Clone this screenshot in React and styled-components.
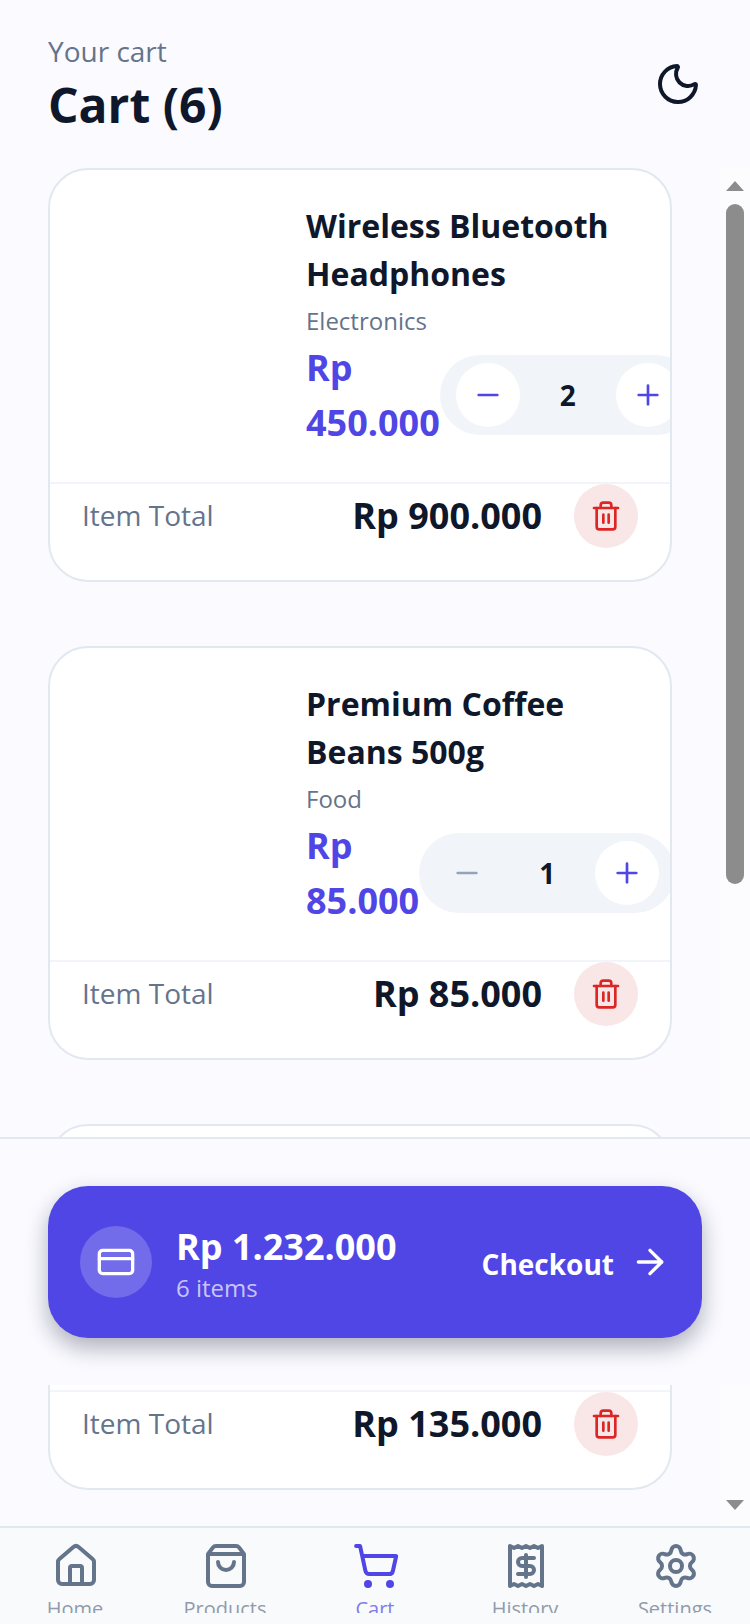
import React from 'react';
import styled, { createGlobalStyle } from 'styled-components';
import {
  ArrowRight,
  CreditCard,
  House,
  Minus,
  Moon,
  Plus,
  Receipt,
  Settings,
  ShoppingBag,
  ShoppingCart,
  Trash2,
} from 'lucide-react';

const items = [
  { id: 1, name: 'Wireless Bluetooth Headphones', category: 'Electronics', price: 'Rp 450.000', qty: 2, total: 'Rp 900.000' },
  { id: 2, name: 'Premium Coffee Beans 500g', category: 'Food', price: 'Rp 85.000', qty: 1, total: 'Rp 85.000', atMin: true },
];

const navItems = [
  { label: 'Home', icon: House },
  { label: 'Products', icon: ShoppingBag },
  { label: 'Cart', icon: ShoppingCart, active: true },
  { label: 'History', icon: Receipt },
  { label: 'Settings', icon: Settings },
];

function CardFooter({ total }) {
  return (
    <Footer>
      <TotalLabel>Item Total</TotalLabel>
      <TotalValue>{total}</TotalValue>
      <TrashButton>
        <Trash2 size={32} />
      </TrashButton>
    </Footer>
  );
}

export default function App() {
  return (
    <Page>
      <GlobalStyle />
      <Header>
        <div>
          <Eyebrow>Your cart</Eyebrow>
          <Title>Cart (6)</Title>
        </div>
        <Moon size={48} color="#0f172a" />
      </Header>

      <Main>
        <List>
          {items.map((item) => (
            <Card key={item.id}>
              <Body>
                <Thumb />
                <Info>
                  <Name>{item.name}</Name>
                  <Category>{item.category}</Category>
                  <PriceRow>
                    <Price>{item.price}</Price>
                    <Stepper>
                      <StepButton $muted={item.atMin}>
                        <Minus size={32} />
                      </StepButton>
                      <Qty>{item.qty}</Qty>
                      <StepButton>
                        <Plus size={32} />
                      </StepButton>
                    </Stepper>
                  </PriceRow>
                </Info>
              </Body>
              <CardFooter total={item.total} />
            </Card>
          ))}
          <Card>
            <Body $height={264} />
            <CardFooter total="Rp 135.000" />
          </Card>
        </List>

        <Rail>
          <ArrowUp />
          <Thumbbar />
          <ArrowDown />
        </Rail>

        <CheckoutDock>
          <CheckoutBar>
            <CardCircle>
              <CreditCard size={40} />
            </CardCircle>
            <Summary>
              <SummaryTotal>Rp 1.232.000</SummaryTotal>
              <SummaryCount>6 items</SummaryCount>
            </Summary>
            <CheckoutAction>
              <CheckoutText>Checkout</CheckoutText>
              <ArrowRight size={40} />
            </CheckoutAction>
          </CheckoutBar>
        </CheckoutDock>
      </Main>

      <Nav>
        {navItems.map(({ label, icon: Icon, active }) => (
          <NavItem key={label} $active={active}>
            <Icon size={48} />
            <NavLabel>{label}</NavLabel>
          </NavItem>
        ))}
      </Nav>
    </Page>
  );
}

const GlobalStyle = createGlobalStyle`
  html, body {
    margin: 0;
    padding: 0;
    background: #fafaff;
  }
  * {
    box-sizing: border-box;
  }
`;

const Page = styled.div`
  width: 750px;
  height: 1624px;
  display: flex;
  flex-direction: column;
  overflow: hidden;
  background: #fafaff;
  font-family: 'Open Sans', 'Noto Sans', sans-serif;
  color: #0f172a;
`;

const Header = styled.header`
  height: 168px;
  flex-shrink: 0;
  padding: 31px 48px 0;
  display: flex;
  justify-content: space-between;
  align-items: flex-start;

  > svg {
    margin-top: 29px;
  }
`;

const Eyebrow = styled.div`
  font-size: 28px;
  line-height: 40px;
  color: #64748b;
`;

const Title = styled.h1`
  margin: 0;
  font-size: 48px;
  line-height: 67px;
  font-weight: 700;
`;

const Main = styled.main`
  flex: 1;
  min-height: 0;
  display: flex;
  position: relative;
  overflow: hidden;
`;

const List = styled.div`
  width: 720px;
  flex-shrink: 0;
  padding: 0 48px;
  display: flex;
  flex-direction: column;
  gap: 64px;
`;

const Card = styled.article`
  flex-shrink: 0;
  background: #fff;
  border: 2px solid #e2e8f0;
  border-radius: 40px;
  overflow: hidden;
`;

const Body = styled.div`
  display: flex;
  height: ${(p) => (p.$height ? `${p.$height}px` : 'auto')};
`;

const Thumb = styled.div`
  width: 256px;
  flex-shrink: 0;
`;

const Info = styled.div`
  flex: 1;
  min-width: 0;
  padding: 32px 32px 32px 0;
`;

const Name = styled.h2`
  margin: 0;
  font-size: 32px;
  line-height: 48px;
  font-weight: 700;
`;

const Category = styled.div`
  margin: 7px 0 3px;
  font-size: 24px;
  line-height: 32px;
  color: #64748b;
`;

const PriceRow = styled.div`
  display: flex;
  align-items: center;
`;

const Price = styled.div`
  font-size: 36px;
  line-height: 55px;
  font-weight: 700;
  color: #4f46e5;
`;

const Stepper = styled.div`
  width: 256px;
  height: 80px;
  flex-shrink: 0;
  padding: 0 16px;
  display: flex;
  align-items: center;
  justify-content: space-between;
  border-radius: 40px;
  background: #f1f5f9;
`;

const StepButton = styled.div`
  width: 64px;
  height: 64px;
  display: flex;
  align-items: center;
  justify-content: center;
  border-radius: 50%;
  background: ${(p) => (p.$muted ? 'transparent' : '#fff')};
  color: ${(p) => (p.$muted ? '#94a3b8' : '#4f46e5')};
`;

const Qty = styled.span`
  font-size: 28px;
  font-weight: 700;
`;

const Footer = styled.div`
  padding: 0 32px 32px;
  display: flex;
  align-items: center;
  border-top: 2px solid #f1f5f9;
`;

const TotalLabel = styled.span`
  flex: 1;
  margin-top: -2px;
  font-size: 28px;
  color: #64748b;
`;

const TotalValue = styled.span`
  margin-top: -2px;
  font-size: 36px;
  font-weight: 700;
`;

const TrashButton = styled.div`
  width: 64px;
  height: 64px;
  margin-left: 32px;
  display: flex;
  align-items: center;
  justify-content: center;
  border-radius: 50%;
  background: #f9e6e6;
  color: #dc2626;
`;

const Rail = styled.div`
  width: 30px;
  padding: 13px 6px 16px;
  display: flex;
  flex-direction: column;
  align-items: center;
  background: #fcfcfe;
`;

const ArrowUp = styled.div`
  width: 0;
  height: 0;
  border-left: 9px solid transparent;
  border-right: 9px solid transparent;
  border-bottom: 10px solid #8c8c8c;
`;

const ArrowDown = styled.div`
  margin-top: auto;
  width: 0;
  height: 0;
  border-left: 9px solid transparent;
  border-right: 9px solid transparent;
  border-top: 10px solid #8c8c8c;
`;

const Thumbbar = styled.div`
  width: 18px;
  height: 680px;
  margin-top: 13px;
  border-radius: 9px;
  background: #8c8c8c;
`;

const CheckoutDock = styled.div`
  position: absolute;
  top: 969px;
  left: 0;
  right: 0;
  height: 248px;
  padding: 47px 48px 0;
  background: #fafaff;
  border-top: 2px solid #e2e8f0;
`;

const CheckoutBar = styled.div`
  height: 152px;
  padding: 0 32px;
  display: flex;
  align-items: center;
  border-radius: 40px;
  background: #4f46e5;
  color: #fff;
  box-shadow: 0 10px 22px rgba(15, 23, 42, 0.32);
`;

const CardCircle = styled.div`
  width: 72px;
  height: 72px;
  flex-shrink: 0;
  display: flex;
  align-items: center;
  justify-content: center;
  border-radius: 50%;
  background: rgba(255, 255, 255, 0.2);
`;

const Summary = styled.div`
  flex: 1;
  margin-left: 24px;
  padding-top: 2px;
`;

const SummaryTotal = styled.div`
  font-size: 36px;
  line-height: 50px;
  font-weight: 700;
`;

const SummaryCount = styled.div`
  font-size: 24px;
  line-height: 32px;
  color: rgba(255, 255, 255, 0.7);
`;

const CheckoutAction = styled.div`
  display: flex;
  align-items: center;
  gap: 16px;
  font-size: 28px;
  font-weight: 700;
`;

const CheckoutText = styled.span`
  padding-top: 3px;
`;

const Nav = styled.nav`
  height: 98px;
  flex-shrink: 0;
  padding: 0 0 11px;
  display: grid;
  grid-template-columns: repeat(5, 150px);
  background: #f9fafc;
  border-top: 2px solid #e2e8f0;
`;

const NavItem = styled.div`
  padding-top: 14px;
  display: flex;
  flex-direction: column;
  align-items: center;
  overflow: hidden;
  color: ${(p) => (p.$active ? '#4f46e5' : '#64748b')};

  > svg {
    flex-shrink: 0;
    margin-left: 2px;
  }
`;

const NavLabel = styled.span`
  margin-top: 4px;
  font-size: 20px;
  line-height: 30px;
  opacity: ${(p) => (p.$active ? 1 : 0.7)};
`;
